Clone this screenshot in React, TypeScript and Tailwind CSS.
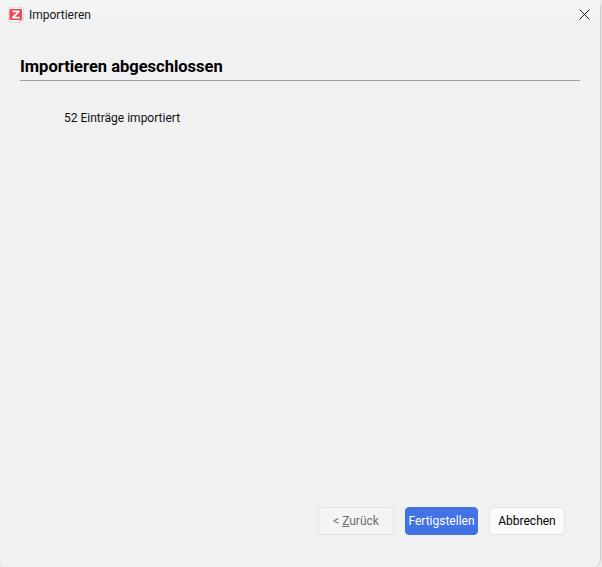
const font = "font-['Roboto','Noto_Sans',sans-serif]";

function ZoteroIcon() {
    return (
        <svg width="16" height="16" viewBox="0 0 16 16" className="shrink-0">
            <rect x="0.5" y="0.5" width="15" height="15" rx="2.5" fill="#f6f1f3" stroke="#dfdbdf" />
            <rect x="1.5" y="2" width="12.5" height="11" rx="1" fill="#ea4453" />
            <path d="M4.4 3.6H11.6V5.2L7 9.8H11.8V11.4H4.2V9.8L8.9 5.2H4.4Z" fill="#ffffff" />
            <path d="M11.5 14.5L14.5 11.5" stroke="#d9a24a" strokeWidth="1.2" />
        </svg>
    );
}

export default function App() {
    return (
        <div className={`${font} w-[602px] h-[567px] bg-[#e9e9ea] overflow-hidden`}>
            <div className="w-[601px] h-[567px] flex flex-col rounded-lg bg-[#f1f1f2] border-r border-[#c9ccd0]">
                {/* Title bar */}
                <div className="h-[30px] shrink-0 flex items-center pl-2 pr-[10px] bg-gradient-to-b from-[#f3f5f6] to-[#f1f1f2]">
                    <ZoteroIcon />
                    <span className="ml-[5px] text-[12px] text-[#1a1a1a]">Importieren</span>
                    <svg width="11" height="11" viewBox="0 0 11 11" className="ml-auto mb-[2px]">
                        <path d="M0.5 0.5L10.5 10.5M10.5 0.5L0.5 10.5" stroke="#1a1a1a" strokeWidth="1" fill="none" />
                    </svg>
                </div>

                {/* Header */}
                <div className="mx-5 mt-[26px] pb-[2px] border-b border-[#a0a0a0]">
                    <h1 className="text-[16.5px] leading-[22px] font-bold text-black">Importieren abgeschlossen</h1>
                </div>

                {/* Body */}
                <div className="flex-1 pl-[64px] pt-[28px]">
                    <p className="text-[12px] leading-[18px] text-[#111]">52 Einträge importiert</p>
                </div>

                {/* Footer buttons */}
                <div className="flex justify-end gap-[11px] pr-[35px] pb-8 text-[12px]">
                    <button className="w-[76px] h-7 rounded border border-[#e3e3e4] bg-[#f4f4f5] text-[#6f6f72]">
                        &lt; <span className="underline">Z</span>urück
                    </button>
                    <button className="w-[73px] h-7 rounded border border-[#4272e4] bg-[#4272e4] text-white">
                        Fertigstellen
                    </button>
                    <button className="w-[76px] h-7 rounded border border-[#e3e3e4] bg-[#fbfbfb] text-black">
                        Abbrechen
                    </button>
                </div>
            </div>
        </div>
    );
}
